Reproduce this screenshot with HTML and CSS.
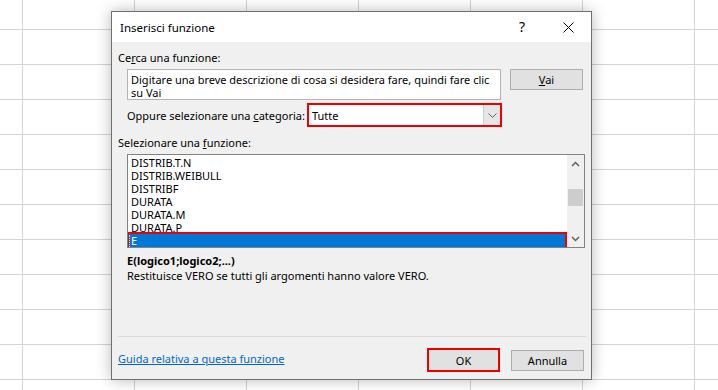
FILE: index.html
```html
<!DOCTYPE html>
<html lang="it">
<head>
  <meta charset="UTF-8" />
  <title>Inserisci funzione</title>
  <link rel="stylesheet" href="styles.css">
</head>
<body>
  <!-- Insert Function dialog over the sheet -->
  <div class="dialog">
    <div class="titlebar">
      <span class="title">Inserisci funzione</span>
      <div class="title-buttons">
        <span class="tb help">?</span>
        <span class="tb close">
          <svg width="11" height="11" viewBox="0 0 11 11"><path d="M0.5 0.5 L10.5 10.5 M10.5 0.5 L0.5 10.5" stroke="#000" stroke-width="1" fill="none"/></svg>
        </span>
      </div>
    </div>

    <div class="content">
      <div class="label">Ce<u>r</u>ca una funzione:</div>
      <div class="search-row">
        <div class="search">Digitare una breve descrizione di cosa si desidera fare, quindi fare clic su Vai</div>
        <button class="btn"><u>V</u>ai</button>
      </div>

      <div class="cat-row">
        <span>Oppure selezionare una <u>c</u>ategoria:</span>
        <div class="select">
          <span class="select-value">Tutte</span>
          <span class="drop">
            <svg width="9" height="5" viewBox="0 0 9 5"><path d="M0.5 0.5 L4.5 4.5 L8.5 0.5" stroke="#606060" stroke-width="1" fill="none"/></svg>
          </span>
        </div>
      </div>

      <div class="label">Selezionare una <u>f</u>unzione:</div>
      <div class="listbox">
        <ul class="items">
          <li>DISTRIB.T.N</li>
          <li>DISTRIB.WEIBULL</li>
          <li>DISTRIBF</li>
          <li>DURATA</li>
          <li>DURATA.M</li>
          <li>DURATA.P</li>
          <li class="selected"><span class="focus">E</span></li>
        </ul>
        <div class="scrollbar">
          <span class="arrow">
            <svg width="9" height="6" viewBox="0 0 9 6"><path d="M1 5 L4.5 1.5 L8 5" stroke="#606060" stroke-width="1.5" fill="none"/></svg>
          </span>
          <span class="thumb"></span>
          <span class="arrow down">
            <svg width="9" height="6" viewBox="0 0 9 6"><path d="M1 1 L4.5 4.5 L8 1" stroke="#606060" stroke-width="1.5" fill="none"/></svg>
          </span>
        </div>
      </div>

      <div class="syntax">E(logico1;logico2;...)</div>
      <div class="desc">Restituisce VERO se tutti gli argomenti hanno valore VERO.</div>

      <div class="footer">
        <a class="help-link" href="#">Guida relativa a questa funzione</a>
        <div class="actions">
          <button class="btn ok">OK</button>
          <button class="btn">Annulla</button>
        </div>
      </div>
    </div>
  </div>
</body>
</html>
```

FILE: styles.css
```css
body {
  margin: 0;
  height: 390px;
  overflow: hidden;
  font-family: "Noto Sans", "Open Sans", sans-serif;
  font-size: 11px;
  color: #000;
  background-color: #fff;
  background-image:
    linear-gradient(to right, #d4d4d4 1px, transparent 1px),
    linear-gradient(to bottom, #d4d4d4 1px, transparent 1px);
  background-size: 112px 35px;
  background-position: 22px 29px;
  padding: 11px 0 0 111px;
  box-sizing: border-box;
}

.dialog {
  width: 481px;
  height: 369px;
  box-sizing: border-box;
  border: 1px solid #6f6f6f;
  background-color: #f0f0f0;
  box-shadow: 0 0 14px rgba(0, 0, 0, 0.28);
  display: flex;
  flex-direction: column;
}

.titlebar {
  height: 30px;
  background-color: #fff;
  display: flex;
  align-items: center;
  justify-content: space-between;
  padding-left: 8px;
}

.title {
  font-size: 11.5px;
}

.title-buttons {
  display: flex;
  height: 100%;
}

.tb {
  width: 46px;
  display: flex;
  align-items: center;
  justify-content: center;
}

.help {
  font-size: 14px;
  padding-bottom: 1px;
}

.content {
  flex: 1;
  display: flex;
  flex-direction: column;
  padding: 0 5px 0 6px;
}

.label {
  line-height: 15px;
  margin-top: 8px;
}

.search-row {
  display: flex;
  margin: 4px 0 0 9px;
}

.search {
  width: 374px;
  height: 31px;
  box-sizing: border-box;
  border: 1px solid #b4b4b4;
  background-color: #fff;
  line-height: 13px;
  padding: 3px 4px 0 3px;
  overflow: hidden;
}

.btn {
  font-family: inherit;
  font-size: 11px;
  color: #000;
  width: 73px;
  height: 21px;
  padding: 0;
  background-color: #e1e1e1;
  border: 1px solid #adadad;
  border-radius: 0;
}

.search-row .btn {
  margin-left: 9px;
}

.cat-row {
  width: 375px;
  height: 24px;
  margin: 3px 0 0 9px;
  display: flex;
  align-items: center;
  justify-content: space-between;
}

.select {
  width: 195px;
  height: 24px;
  box-sizing: border-box;
  border: 2px solid #ee0000;
  background-color: #fff;
  display: flex;
  align-items: center;
  justify-content: space-between;
}

.select-value {
  padding-left: 3px;
}

.drop {
  width: 16px;
  height: 100%;
  background-color: #e6e6e6;
  border-left: 1px solid #cfcfcf;
  display: flex;
  align-items: center;
  justify-content: center;
}

.listbox {
  width: 458px;
  height: 94px;
  margin: 4px 0 0 9px;
  box-sizing: border-box;
  border: 1px solid #828282;
  background-color: #fff;
  display: flex;
}

.items {
  list-style-type: none;
  margin: 0;
  padding: 1px 2px 0 1px;
  flex: 1;
  overflow: hidden;
}

.items li {
  height: 13px;
  line-height: 13px;
  padding-left: 2px;
}

.items .selected {
  background-color: #0078d7;
  color: #fff;
  outline: 2px solid #ee0000;
}

.focus {
  display: inline-block;
  line-height: 12px;
  border-left: 1px dotted #c8dcf0;
  margin-left: -2px;
  padding-left: 1px;
}

.scrollbar {
  width: 17px;
  background-color: #f0f0f0;
  display: flex;
  flex-direction: column;
  align-items: center;
}

.arrow {
  width: 17px;
  height: 17px;
  display: flex;
  align-items: center;
  justify-content: center;
}

.thumb {
  width: 15px;
  height: 17px;
  margin-top: 17px;
  background-color: #cdcdcd;
}

.arrow.down {
  margin-top: auto;
}

.syntax {
  font-weight: bold;
  line-height: 15px;
  margin: 5px 0 0 9px;
}

.desc {
  line-height: 15px;
  margin-left: 9px;
}

.footer {
  margin-top: auto;
  border-top: 1px solid #dadada;
  padding: 11px 2px 7px 0;
  display: flex;
  align-items: center;
  justify-content: space-between;
}

.help-link {
  color: #0066cc;
  text-decoration: underline;
  margin-bottom: 3px;
}

.actions {
  display: flex;
  align-items: center;
  gap: 11px;
}

.btn.ok {
  height: 24px;
  border: 2px solid #ee0000;
}
```
